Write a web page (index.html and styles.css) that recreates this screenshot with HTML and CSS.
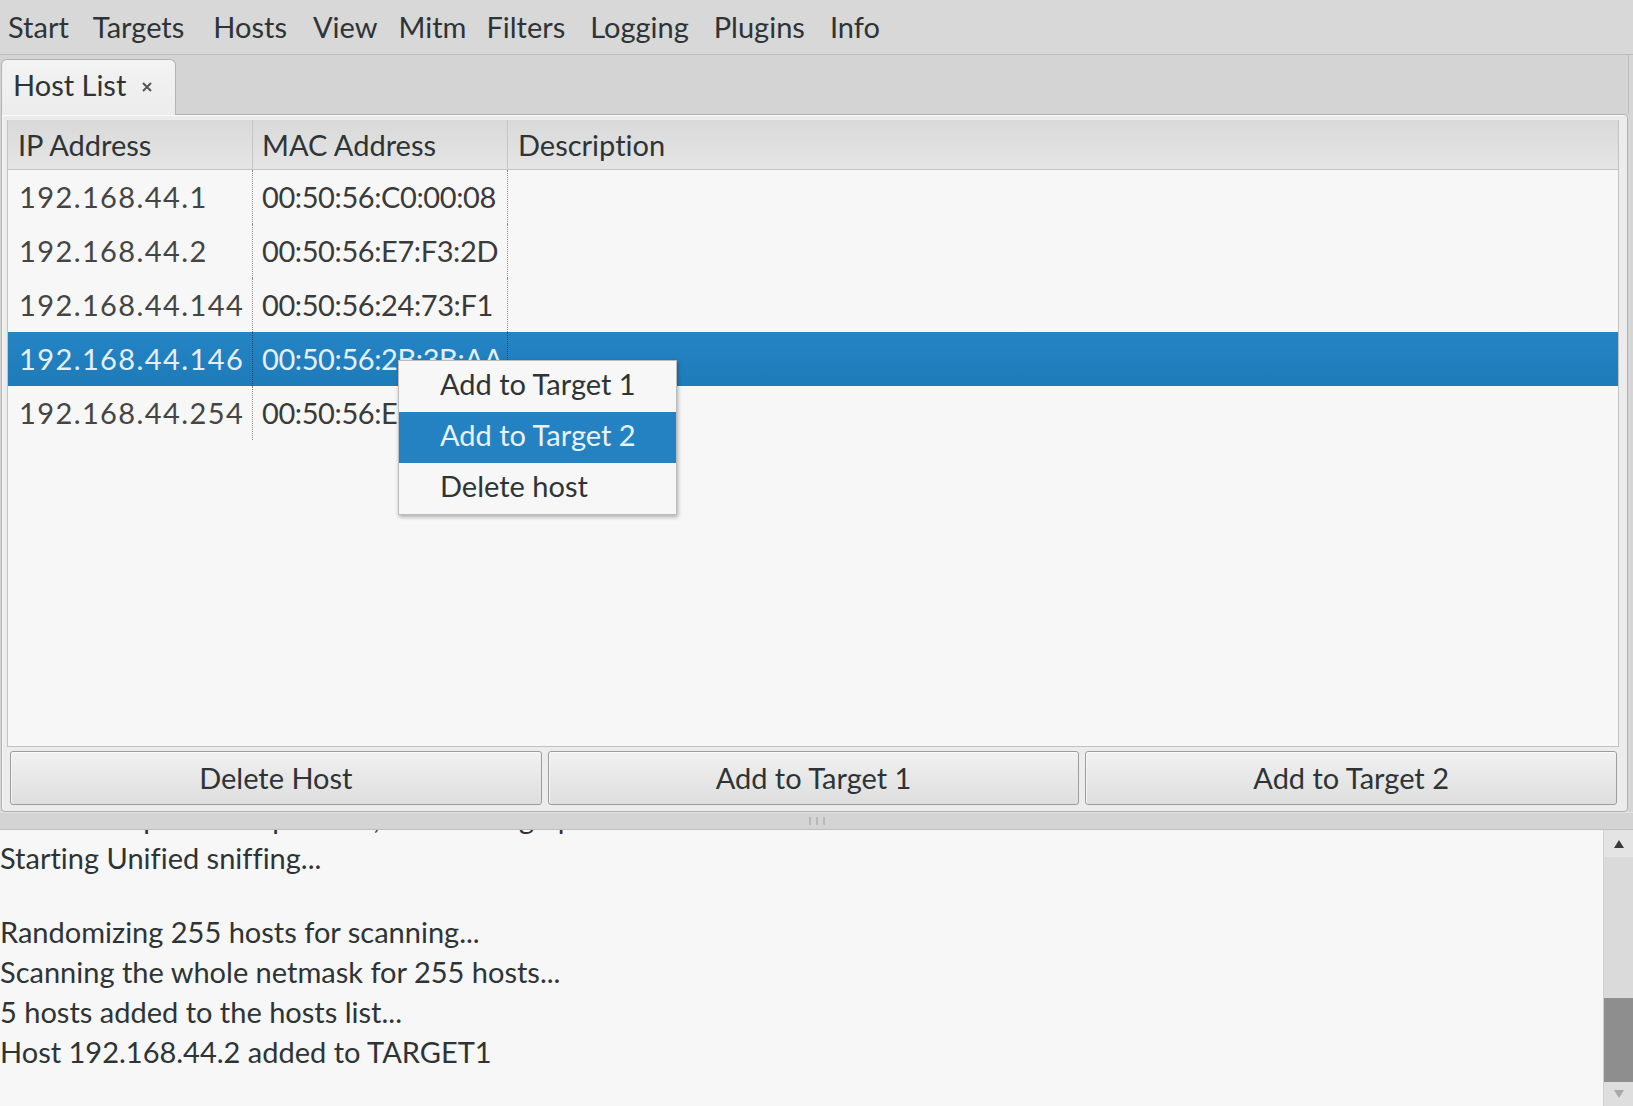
FILE: index.html
```html
<!DOCTYPE html>
<html>
<head>
<meta charset="utf-8">
<title>ettercap</title>
<link rel="stylesheet" href="styles.css">
</head>
<body>
<div class="menubar">
  <span class="mi">Start</span>
  <span class="mi">Targets</span>
  <span class="mi">Hosts</span>
  <span class="mi">View</span>
  <span class="mi">Mitm</span>
  <span class="mi">Filters</span>
  <span class="mi">Logging</span>
  <span class="mi">Plugins</span>
  <span class="mi">Info</span>
</div>
<div class="notebook">
  <div class="tabstrip">
    <div class="tab">
      <span class="tab-label">Host List</span>
      <svg class="tab-close" width="10" height="10" viewBox="0 0 10 10"><path d="M1 1L9 9M9 1L1 9" stroke="#555" stroke-width="2"/></svg>
    </div>
  </div>
  <div class="frame">
    <div class="tree">
      <div class="thead">
        <div class="th c1">IP Address</div>
        <div class="th c2">MAC Address</div>
        <div class="th c3">Description</div>
      </div>
      <div class="tbody">
        <div class="tr"><div class="td c1">192.168.44.1</div><div class="td c2">00:50:56:C0:00:08</div><div class="td c3"></div></div>
        <div class="tr"><div class="td c1">192.168.44.2</div><div class="td c2">00:50:56:E7:F3:2D</div><div class="td c3"></div></div>
        <div class="tr"><div class="td c1">192.168.44.144</div><div class="td c2">00:50:56:24:73:F1</div><div class="td c3"></div></div>
        <div class="tr selected"><div class="td c1">192.168.44.146</div><div class="td c2">00:50:56:2B:3B:AA</div><div class="td c3"></div></div>
        <div class="tr"><div class="td c1">192.168.44.254</div><div class="td c2">00:50:56:EC:8E:2A</div><div class="td c3"></div></div>
      </div>
    </div>
    <div class="buttons">
      <div class="btn">Delete Host</div>
      <div class="btn">Add to Target 1</div>
      <div class="btn">Add to Target 2</div>
    </div>
  </div>
</div>
<div class="handle"><span class="grip"></span><span class="grip"></span><span class="grip"></span></div>
<div class="logpane">
  <div class="log">
    <div class="line cut">Lua: no scripts were specified, not starting up!</div>
    <div class="line">Starting Unified sniffing...</div>
    <div class="blank"></div>
    <div class="line">Randomizing 255 hosts for scanning...</div>
    <div class="line">Scanning the whole netmask for 255 hosts...</div>
    <div class="line">5 hosts added to the hosts list...</div>
    <div class="line">Host 192.168.44.2 added to TARGET1</div>
  </div>
  <div class="scrollbar">
    <div class="sb-btn sb-up"><svg width="12" height="10" viewBox="0 0 12 10"><path d="M6 1L11 9H1Z" fill="#3a3a3a"/></svg></div>
    <div class="sb-trough"><div class="sb-thumb"></div></div>
    <div class="sb-btn sb-down"><svg width="12" height="10" viewBox="0 0 12 10"><path d="M1 1H11L6 9Z" fill="#a9a9a9"/></svg></div>
  </div>
</div>
<div class="ctxmenu">
  <div class="ctx-item">Add to Target 1</div>
  <div class="ctx-item active">Add to Target 2</div>
  <div class="ctx-item">Delete host</div>
</div>
</body>
</html>
```
FILE: styles.css
```css
* { box-sizing: border-box; }
html, body { margin: 0; padding: 0; }
body {
  width: 1633px;
  height: 1106px;
  overflow: hidden;
  background: #d6d6d6;
  font-family: Lato, "Noto Sans", sans-serif;
  font-size: 29px;
  font-variant-ligatures: none;
  color: #2e3436;
  position: relative;
}
.menubar {
  height: 55px;
  display: flex;
  align-items: flex-start;
  padding-left: 8px;
  gap: 24px;
  background: #d8d8d8;
  border-bottom: 1px solid #bdbdbd;
  line-height: 53px;
}
.mi { white-space: nowrap; }
.mi:nth-child(3) { margin-left: 5px; }
.mi:nth-child(4) { margin-left: 2px; }
.mi:nth-child(5) { margin-left: -3px; }
.mi:nth-child(6) { margin-left: -4px; }
.mi:nth-child(7), .mi:nth-child(8), .mi:nth-child(9) { margin-left: 1px; }

.notebook { height: 757px; }
.tabstrip {
  height: 59px;
  padding-top: 4px;
  padding-left: 1px;
  background: #d4d4d4;
  border-right: 1px solid #bdbdbd;
  margin-right: 4px;
}
.tab {
  position: relative;
  z-index: 2;
  width: 175px;
  height: 56px;
  margin-bottom: -1px;
  padding-left: 11px;
  display: flex;
  align-items: flex-start;
  line-height: 50px;
  background: linear-gradient(#f3f3f3, #ececec);
  border: 1px solid #b3b3b3;
  border-bottom: none;
  border-radius: 6px 6px 0 0;
}
.tab-close { margin-left: 16px; margin-top: 22px; }

.frame {
  position: relative;
  height: 698px;
  margin-left: 1px;
  margin-right: 5px;
  border: 1px solid #b0b0b0;
  border-radius: 0 4px 4px 4px;
  background: #ececec;
  box-shadow: inset 1px 1px 0 #fafafa;
  padding: 5px 8px 6px 5px;
  display: flex;
  flex-direction: column;
}
.tree {
  height: 627px;
  border: 1px solid #c2c2c2;
  border-top: none;
  background: #f7f7f7;
  display: flex;
  flex-direction: column;
}
.thead {
  height: 50px;
  display: flex;
  background: linear-gradient(#d9d9d9, #e5e5e5);
  border-bottom: 1px solid #c4c4c4;
  line-height: 49px;
}
.th { white-space: nowrap; }
.c1 { width: 244px; padding-left: 10px; }
.c2 { width: 255px; padding-left: 9px; }
.c3 { flex: 1; padding-left: 10px; }
.thead .c2, .thead .c3 { border-left: 1px solid #c6c6c6; }

.tbody { display: flex; flex-direction: column; }
.tr {
  height: 54px;
  display: flex;
  line-height: 54px;
  color: #3a3a3a;
}
.td { white-space: nowrap; overflow: hidden; }
.tr .c1 { padding-left: 11px; letter-spacing: 1.4px; color: #454545; }
.tr .c2 { letter-spacing: -0.4px; }
.tr .c2, .tr .c3 { border-left: 1px dotted #8a8a8a; }
.tr.selected {
  background: linear-gradient(#2484c4, #1f7bba);
  color: #e4eff8;
}
.tr.selected .c1 { color: #e4eff8; }
.tr.selected .c2, .tr.selected .c3 { border-left-color: #1a4a6a; }

.buttons {
  margin: 4px 2px 0 3px;
  display: grid;
  grid-template-columns: 1fr 1fr 1fr;
  gap: 6px;
}
.btn {
  height: 54px;
  line-height: 52px;
  text-align: center;
  border: 1px solid #9c9c9c;
  border-radius: 3px;
  background: linear-gradient(#f1f1f1, #dedede);
  box-shadow: inset 0 1px 0 #fbfbfb, inset 1px 0 0 #f6f6f6;
  color: #2e3436;
}

.handle {
  height: 18px;
  background: #d4d4d4;
  border-top: 1px solid #e2e2e2;
  border-bottom: 1px solid #bebebe;
  display: flex;
  justify-content: center;
  align-items: center;
  gap: 5px;
}
.grip { width: 2px; height: 8px; background: #b9b9b9; }

.logpane {
  height: 276px;
  display: flex;
  background: #f7f7f7;
}
.log {
  flex: 1;
  overflow: hidden;
  line-height: 40px;
  color: #2e3436;
}
.line { white-space: nowrap; height: 40px; }
.line.cut { margin-top: -32px; }
.blank { height: 34px; }

.scrollbar {
  width: 30px;
  display: flex;
  flex-direction: column;
  background: #dadada;
  border-left: 1px solid #cfcfcf;
}
.sb-btn {
  height: 27px;
  display: flex;
  align-items: center;
  justify-content: center;
  background: #e4e4e4;
}
.sb-down { height: 24px; background: #dedede; }
.sb-trough { flex: 1; display: flex; flex-direction: column; justify-content: flex-end; }
.sb-thumb { height: 84px; background: #8e8e8e; }

.ctxmenu {
  position: absolute;
  left: 398px;
  top: 360px;
  width: 279px;
  background: #f7f7f7;
  border: 1px solid #bcbcbc;
  box-shadow: 1px 2px 4px rgba(0,0,0,0.3);
  z-index: 10;
}
.ctx-item {
  height: 51px;
  line-height: 46px;
  padding-left: 41px;
  color: #2e3436;
  white-space: nowrap;
}
.ctx-item.active {
  background: #2582c2;
  color: #e8f2fa;
}
```
